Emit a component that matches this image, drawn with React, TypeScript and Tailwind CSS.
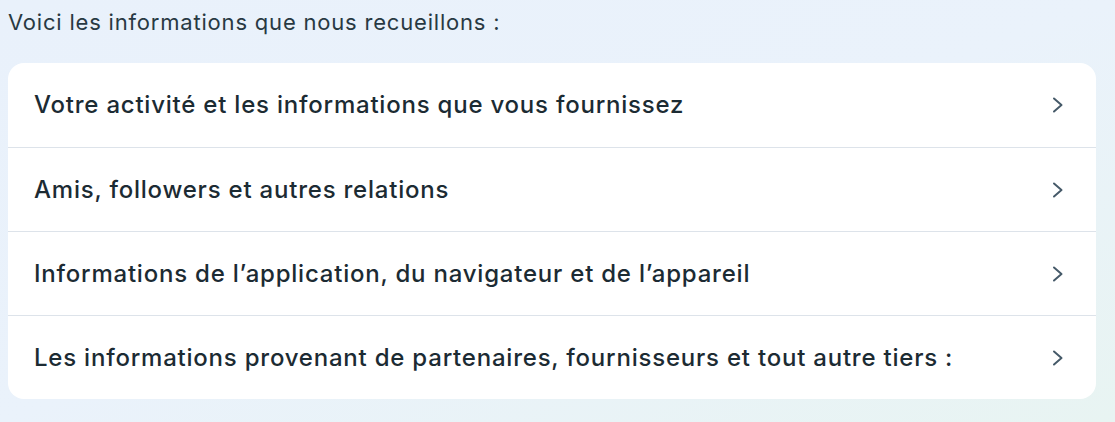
const items = [
  'Votre activité et les informations que vous fournissez',
  'Amis, followers et autres relations',
  'Informations de l’application, du navigateur et de l’appareil',
  'Les informations provenant de partenaires, fournisseurs et tout autre tiers :',
];

function Chevron() {
  return (
    <svg width="12" height="16" viewBox="0 0 12 16" fill="none" className="shrink-0 text-[#465a69]">
      <path d="M2 1.5 9.5 8 2 14.5" stroke="currentColor" strokeWidth="2" strokeLinecap="round" strokeLinejoin="round" />
    </svg>
  );
}

export default function App() {
  return (
    <div className="min-h-[422px] w-full bg-gradient-to-br from-[#e9f1fb] via-[#eaf2fb] to-[#e8f4f2] pl-2 pr-[19px] pt-[7px] font-['Inter',sans-serif]">
      <p className="text-[22px] leading-[30px] tracking-[0.8px] text-[#283943]">Voici les informations que nous recueillons :</p>
      <div className="mt-[26px] overflow-hidden rounded-2xl bg-white">
        {items.map((t, i) => (
          <button
            key={t}
            className={`flex h-[84px] w-full items-center justify-between pl-[26px] pr-[32px] text-left ${i > 0 ? 'border-t border-[#dde3ea]' : ''}`}
          >
            <span className="text-[24px] font-medium tracking-[0.78px] text-[#1c2b33]">{t}</span>
            <Chevron />
          </button>
        ))}
      </div>
    </div>
  );
}
